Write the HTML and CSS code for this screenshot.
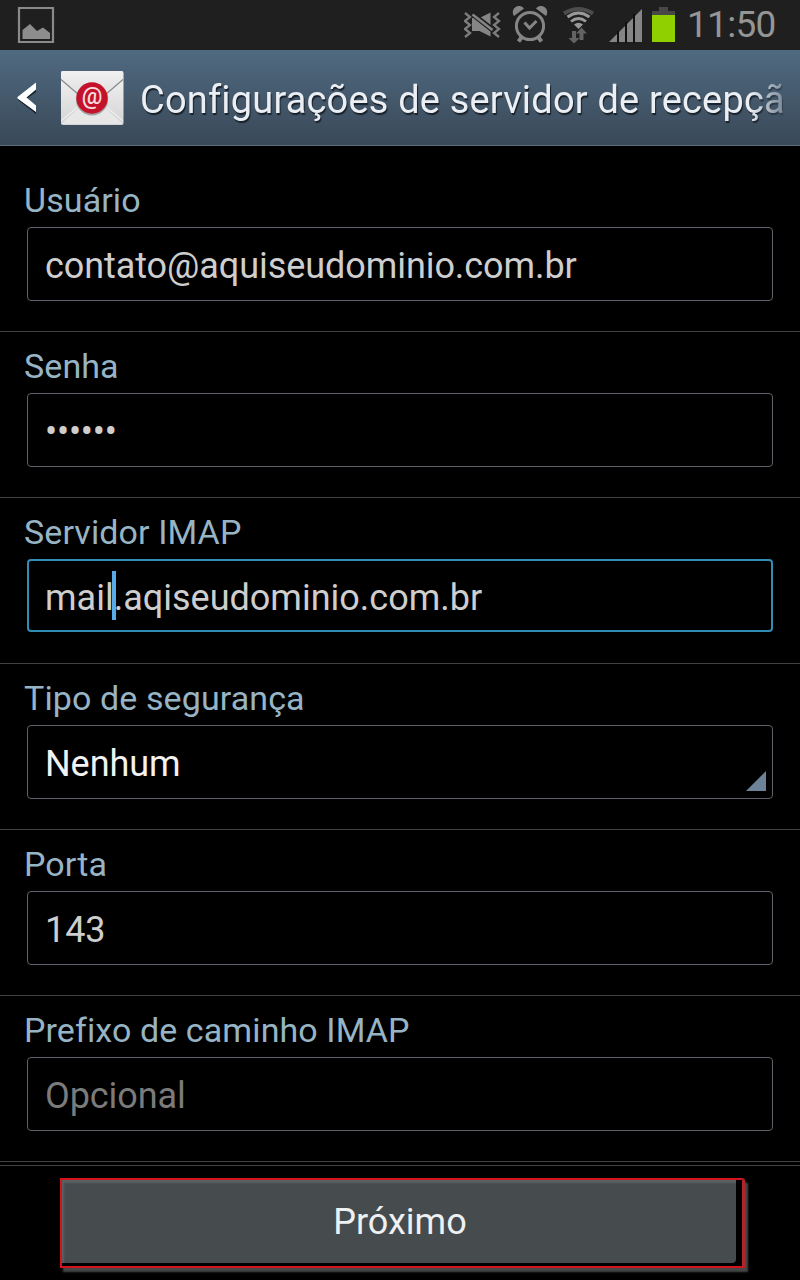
FILE: index.html
```html
<!DOCTYPE html>
<html lang="pt-BR">
  <head>
    <title>Configurações de servidor de recepção</title>
    <meta charset="UTF-8" />
    <link rel="stylesheet" href="styles.css">
  </head>
  <body>
    <div class="status-bar">
      <svg class="status-picture" width="38" height="38" viewBox="0 0 38 38">
        <path d="M2 2h34v34H2z" fill="none" stroke="#8a8a8a" stroke-width="2.2" />
        <path d="M5.500 33V24l7.500-6 7 7 6-3.500 7 5.500v6z" fill="#8d8d8d" />
      </svg>
      <div class="status-icons">
        <svg width="336" height="50" viewBox="464 0 336 50" fill="#858585">
          <!-- vibrate / muted -->
          <path d="M465 13l5 4-5 4 5 4-5 4 5 4-5 4M499 13l-5 4 5 4-5 4 5 4-5 4 5 4" fill="none" stroke="#7d7d7d" stroke-width="2.3" />
          <path d="M472 18h1.500L490.500 31.500V36.500L479.500 31H472zM480.500 17.500l10-5v13z" />
          <path d="M472.500 14l20 15.500" stroke="#1f1f1f" stroke-width="5" />
          <path d="M472.500 14.500l20 15.500" stroke="#858585" stroke-width="2.600" />
          <!-- alarm -->
          <circle cx="530" cy="26" r="13.600" fill="none" stroke="#858585" stroke-width="3" />
          <path d="M514 16a5.800 5.800 0 0 1 10-7.500zM546 16a5.800 5.800 0 0 0-10-7.500z" />
          <path d="M521.500 37.500l-3 4M538.500 37.500l3 4" stroke="#858585" stroke-width="4" />
          <path d="M524.500 22.500l5 5.500 7-7" fill="none" stroke="#858585" stroke-width="3" />
          <!-- wifi -->
          <path d="M564 13.500q14.500-9 29 0" fill="none" stroke="#4c4c4c" stroke-width="4" />
          <path d="M567.500 17q11-8 22 0M571 21.500q7.500-6 15 0" fill="none" stroke="#999" stroke-width="2.800" />
          <path d="M574 24.500q4.500-3.500 9 0l-4.500 4.500z" fill="#999" />
          <path d="M572 31h4v7h3.500l-5.500 5.500-5.500-5.500h3.500zM579.500 40h4v-6.500h3.500l-5.500-6-5.500 6h3.500z" fill="#636363" />
          <!-- signal -->
          <path d="M609 42L642 9v33z" />
          <path d="M618 31v12M626 22v21M634 14v29" stroke="#101010" stroke-width="2" />
          <!-- battery -->
          <path d="M659 7h9v4h7v4h-23v-4h7z" fill="#484848" />
          <path d="M652 15h23v27h-23z" fill="#91d000" />
        </svg>
        <span class="clock">11:50</span>
      </div>
    </div>

    <div class="action-bar">
      <svg class="back" width="20" height="34" viewBox="0 0 20 34">
        <path d="M19 3v7L9.500 17 19 25v7L1 18v-2z" fill="#17202a" />
        <path d="M19 .5v7L9.500 15.500 19 23.500v6.500L.5 16.500v-1.500z" fill="#fff" />
      </svg>
      <svg class="mail-icon" width="64" height="56" viewBox="0 0 64 56">
        <defs>
          <linearGradient id="paper" x1="0" y1="0" x2="0" y2="1">
            <stop offset="0" stop-color="#f4f4f4" />
            <stop offset="1" stop-color="#d3d3d3" />
          </linearGradient>
          <linearGradient id="flap" x1="0" y1="0" x2="0" y2="1">
            <stop offset="0" stop-color="#f1f1f1" />
            <stop offset="1" stop-color="#d9d9d9" />
          </linearGradient>
        </defs>
        <rect x="1" y="1" width="62.500" height="54" rx="2" fill="url(#paper)" />
        <path d="M1 54l27-24h8l27 24z" fill="#e7e7e7" />
        <path d="M1 51l26-22M63 51L37 29" stroke="#f9f9f9" />
        <path d="M1 9l29 25h4l29-25V3q0-2-2-2H3q-2 0-2 2z" fill="url(#flap)" />
        <path d="M1 9.500l29 25h4l29-25" fill="none" stroke="#858585" stroke-width="1.100" />
        <circle cx="32" cy="29.500" r="16" fill="#5b5b5b" opacity=".5" />
        <circle cx="32" cy="28" r="15.700" fill="#c4122b" />
        <text x="32" y="34" class="at">@</text>
      </svg>
      <h1>Configurações de servidor de recepçã</h1>
    </div>

    <div class="form">
      <div class="row">
        <label>Usuário</label>
        <div class="field user">contato@aquiseudominio.com.br</div>
      </div>
      <div class="row">
        <label>Senha</label>
        <div class="field password">••••••</div>
      </div>
      <div class="row">
        <label>Servidor IMAP</label>
        <div class="field focused">mail<span class="caret"></span>.aqiseudominio.com.br</div>
      </div>
      <div class="row">
        <label>Tipo de segurança</label>
        <div class="field select">Nenhum</div>
      </div>
      <div class="row">
        <label>Porta</label>
        <div class="field">143</div>
      </div>
      <div class="row">
        <label>Prefixo de caminho IMAP</label>
        <div class="field optional">Opcional</div>
      </div>
    </div>

    <div class="footer">
      <div class="highlight">
        <button class="next">Próximo</button>
      </div>
    </div>
  </body>
</html>
```

FILE: styles.css
```css
html,
body {
  margin: 0;
  padding: 0;
  background: #000;
  font-family: Roboto, sans-serif;
  font-variant-ligatures: none;
  overflow: hidden;
}

body {
  width: 800px;
  height: 1280px;
}

svg {
  display: block;
  flex: none;
}

.status-bar {
  display: flex;
  justify-content: space-between;
  height: 50px;
  background: #1f1f1f;
}

.status-picture {
  margin: 6px 0 0 17px;
}

.status-icons {
  position: relative;
}

/* clock sits over the icon strip */
.clock {
  position: absolute;
  left: 223px;
  top: 2px;
  font-size: 37px;
  line-height: 46px;
  letter-spacing: -0.7px;
  color: #959595;
}

.action-bar {
  display: flex;
  box-sizing: border-box;
  height: 96px;
  background: linear-gradient(#506a81, #394857);
  border-bottom: 1px solid #5b6d78;
}

.back {
  margin: 32px 0 0 17px;
}

.mail-icon {
  margin: 20px 0 0 23px;
}

.at {
  font: 500 23px Roboto, sans-serif;
  text-anchor: middle;
  fill: #f7dcdc;
}

h1 {
  margin: 0 0 0 16px;
  width: 645px;
  overflow: hidden;
  white-space: nowrap;
  font-weight: 400;
  font-size: 38px;
  line-height: 100px;
  letter-spacing: 0.18px;
  color: #ebeff4;
  text-shadow: 1px 2px 1px #18212b;
  mask-image: linear-gradient(90deg, #000 610px, transparent 660px);
}

.form {
  padding-top: 20px;
}

.row {
  box-sizing: border-box;
  height: 166px;
  padding: 14px 27px 0;
  border-bottom: 1px solid #424242;
}

.row label {
  display: block;
  margin-left: -3px;
  height: 47px;
  font-size: 34px;
  line-height: 40px;
  letter-spacing: 0.1px;
  color: #97b4c4;
}

.field {
  box-sizing: border-box;
  height: 74px;
  width: 746px;
  padding-left: 17px;
  border: 1px solid #5c6268;
  border-radius: 4px;
  font-size: 36px;
  line-height: 76px;
  letter-spacing: -0.07px;
  color: #cecece;
  white-space: nowrap;
}

.row .password {
  letter-spacing: -0.2px;
}

.focused {
  height: 73px;
  padding-left: 16px;
  border: 2px solid #328db5;
  line-height: 75px;
  letter-spacing: 0;
}

.caret {
  display: inline-block;
  width: 4px;
  height: 49px;
  margin: 0 -2px;
  background: #57a9e8;
  vertical-align: -10px;
}

.select {
  position: relative;
  color: #f2f2f2;
}

.select::after {
  content: "";
  position: absolute;
  right: 6px;
  bottom: 7px;
  width: 20px;
  height: 20px;
  background: #6b8298;
  clip-path: polygon(100% 0, 100% 100%, 0 100%);
}

.optional {
  color: #7b7b7b;
}

.footer {
  box-sizing: border-box;
  height: 115px;
  margin-top: 3px;
  padding: 12px 0 0 60px;
  border-top: 1px solid #424242;
}

.highlight {
  box-sizing: border-box;
  width: 685px;
  height: 90px;
  border: 2px solid #d4131b;
  border-right-color: #b0242a;
  border-right-width: 3px;
  border-top-right-radius: 3px;
  box-shadow: 3px 4px 2px #474747;
  background: #000;
}

.next {
  display: block;
  width: 674px;
  height: 83px;
  padding: 0 0 0 2px;
  border: 0;
  border-radius: 0 0 4px 0;
  background: #464b4e;
  box-shadow: inset 2px 3px 2px #5a6064;
  font-family: inherit;
  font-size: 36px;
  color: #eef1f3;
}
```
